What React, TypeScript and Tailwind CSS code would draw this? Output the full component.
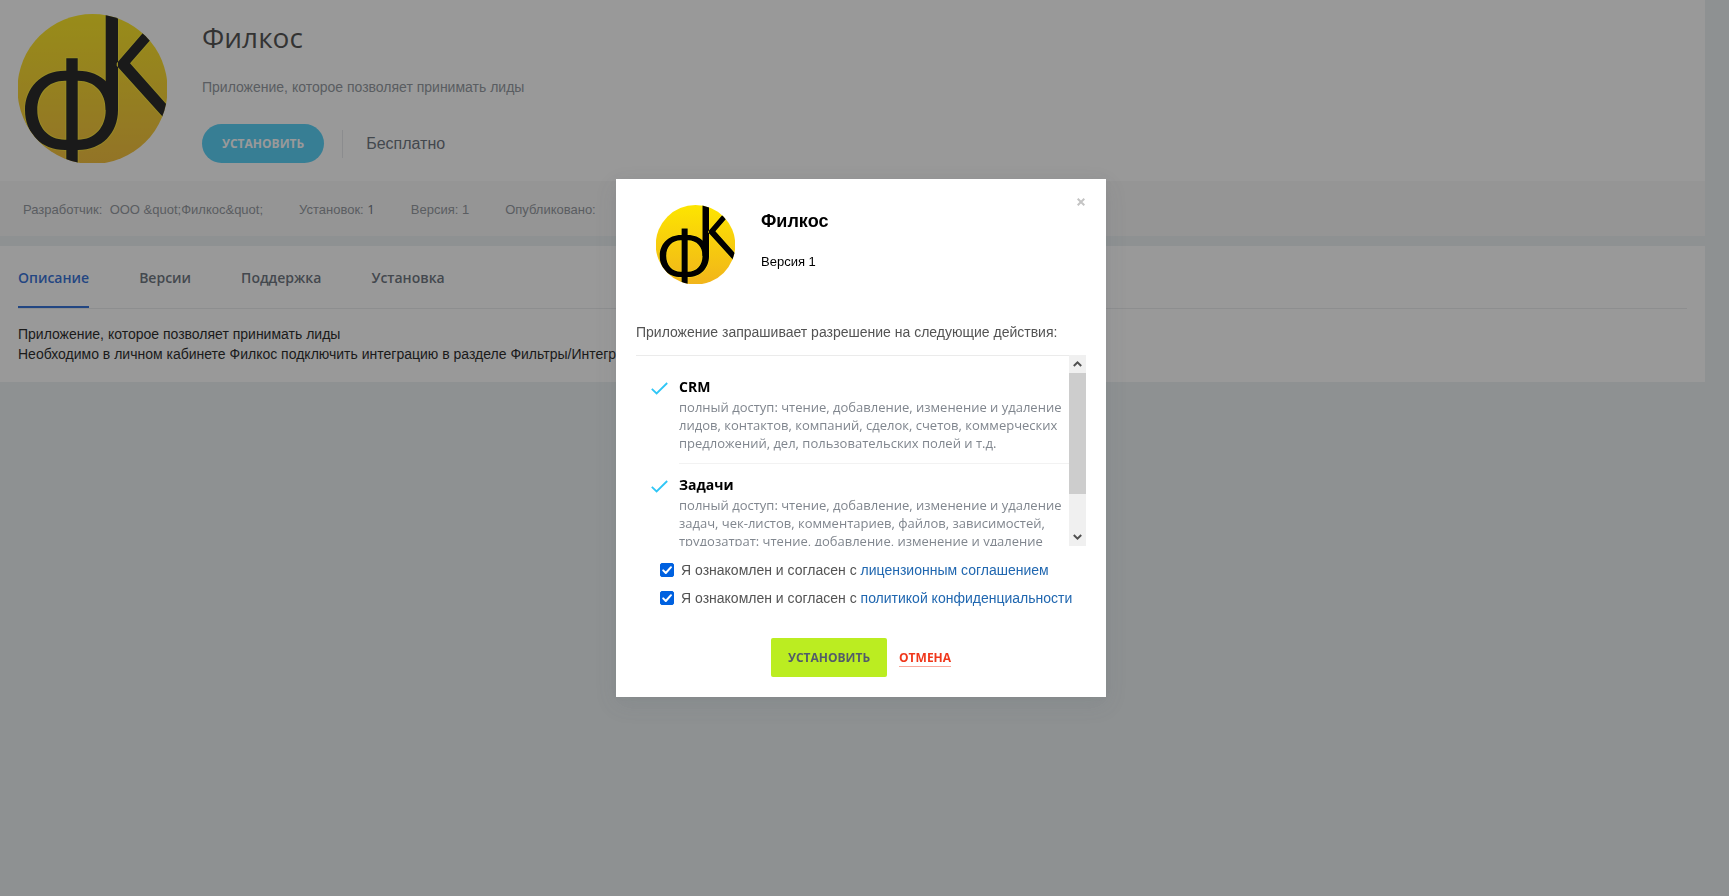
import { useId, useState } from 'react';

interface Permission {
  title: string;
  description: string;
}

const tabs = ['Описание', 'Версии', 'Поддержка', 'Установка'];

const permissions: Permission[] = [
  {
    title: 'CRM',
    description:
      'полный доступ: чтение, добавление, изменение и удаление лидов, контактов, компаний, сделок, счетов, коммерческих предложений, дел, пользовательских полей и т.д.',
  },
  {
    title: 'Задачи',
    description:
      'полный доступ: чтение, добавление, изменение и удаление задач, чек-листов, комментариев, файлов, зависимостей, трудозатрат: чтение, добавление, изменение и удаление',
  },
];

const LETTERS =
  'M87.7 -2H100V96H87.7Z M48.3 44.3H59.7V152H48.3Z M98.7 49.3L137 5L145 11.5L112 49.3L156 98.8L154 113L98.7 51.7Z';
const RING =
  'M47 56.7H60C84 56.7 100 74 100 96C100 119 84 136 60 136H47C23 136 7 119 7 96C7 74 23 56.7 47 56.7Z M47 66.7C30 66.7 19.3 79 19.3 96C19.3 113 30 125.7 47 125.7H60C77 125.7 87.7 113 87.7 96C87.7 79 77 66.7 60 66.7Z';

function AppLogo({ className }: { className: string }) {
  const id = useId();
  return (
    <svg viewBox="0 0 149 149" className={className} aria-hidden="true">
      <defs>
        <linearGradient id={`${id}-fill`} x1="0" y1="0" x2="0" y2="1">
          <stop offset="0" stopColor="#fde500" />
          <stop offset="1" stopColor="#f1b41b" />
        </linearGradient>
        <clipPath id={`${id}-clip`}>
          <circle cx="74.5" cy="75" r="75" />
        </clipPath>
      </defs>
      <g clipPath={`url(#${id}-clip)`}>
        <rect width="149" height="150" fill={`url(#${id}-fill)`} />
        <g fill="none" stroke="#fdf01c" strokeWidth="2" opacity="0.6">
          <path d={LETTERS} />
          <path d={RING} />
        </g>
        <g fill="#000" fillRule="evenodd">
          <path d={LETTERS} />
          <path d={RING} />
        </g>
      </g>
    </svg>
  );
}

function Agreement({ link }: { link: string }) {
  const [checked, setChecked] = useState(true);
  return (
    <label className="flex h-7 items-center gap-[7px] text-sm text-[#535353]">
      <span className="relative h-3.5 w-3.5 shrink-0">
        <input
          type="checkbox"
          checked={checked}
          onChange={(e) => setChecked(e.target.checked)}
          className="block h-3.5 w-3.5 appearance-none rounded-[2px] border border-[#8f8f9d] bg-white checked:border-[#0061e0] checked:bg-[#0061e0]"
        />
        {checked && (
          <svg viewBox="0 0 14 14" className="pointer-events-none absolute inset-0 h-3.5 w-3.5" aria-hidden="true">
            <path d="M3.2 7.4L5.8 10L11 4.2" fill="none" stroke="#fff" strokeWidth="2" strokeLinecap="round" strokeLinejoin="round" />
          </svg>
        )}
      </span>
      <span className="whitespace-nowrap">
        Я ознакомлен и согласен с <a href="#" className="text-[#2067b0]">{link}</a>
      </span>
    </label>
  );
}

function ScrollArrow({ label, path }: { label: string; path: string }) {
  return (
    <button type="button" aria-label={label} className="flex h-[18px] w-full items-center justify-center">
      <svg viewBox="0 0 9 6" className="h-1.5 w-[9px]" aria-hidden="true">
        <path d={path} fill="none" stroke="#505050" strokeWidth="2" />
      </svg>
    </button>
  );
}

function InstallDialog() {
  return (
    <div className="fixed inset-0 flex items-center justify-center bg-[#333]/50 pr-[7px] pb-5">
      <div role="dialog" aria-label="Филкос" className="relative w-[490px] bg-white px-5 pt-[26px] pb-5 shadow-[0_7px_21px_rgba(83,92,105,0.12),0_-1px_6px_rgba(83,92,105,0.06)]">
        <button type="button" aria-label="Закрыть" className="absolute top-[18px] right-5 p-[1px]">
          <svg viewBox="0 0 8 8" className="h-2 w-2" aria-hidden="true">
            <path d="M0.7 0.7L7.3 7.3M7.3 0.7L0.7 7.3" stroke="#c4c4c4" strokeWidth="2" />
          </svg>
        </button>

        <div className="flex pl-5">
          <AppLogo className="h-[79px] w-[79px] shrink-0" />
          <div className="pt-1 pl-[26px] text-black">
            <h2 className="text-lg leading-6 font-bold">Филкос</h2>
            <p className="mt-[19px] text-[13px] leading-5">Версия 1</p>
          </div>
        </div>

        <p className="mt-[38px] text-sm text-[#535353]">Приложение запрашивает разрешение на следующие действия:</p>

        <div className="mt-[13px] flex h-[191px]">
          <ul className="flex-1 overflow-hidden border-t border-[#ebebeb] pt-2.5 pl-[15px]">
            {permissions.map((item) => (
              <li key={item.title} className="flex font-['Open_Sans',sans-serif]">
                <svg viewBox="0 0 17 13" className="mt-4 h-[13px] w-[17px] shrink-0" aria-hidden="true">
                  <path d="M0.8 6.8L5.6 11.4L16.2 1" fill="none" stroke="#2fc6f6" strokeWidth="1.8" />
                </svg>
                <div className="ml-[11px] flex-1 border-b border-[#f2f2f2] pt-[11px] pb-[11px]">
                  <h3 className="text-sm leading-5 font-bold text-black">{item.title}</h3>
                  <p className="pt-[1px] text-[13px] leading-[18px] text-[#80868e]">{item.description}</p>
                </div>
              </li>
            ))}
          </ul>
          <div className="flex w-[17px] flex-col bg-[#f0f0f0]">
            <ScrollArrow label="Вверх" path="M0.8 5L4.5 1.4L8.2 5" />
            <div className="flex-1">
              <div className="h-[121px] bg-[#cdcdcd]" />
            </div>
            <ScrollArrow label="Вниз" path="M0.8 1L4.5 4.6L8.2 1" />
          </div>
        </div>

        <div className="mt-2.5 pl-6">
          <Agreement link="лицензионным соглашением" />
          <Agreement link="политикой конфиденциальности" />
        </div>

        <div className="mt-[26px] flex items-center justify-center gap-3 font-['Open_Sans',sans-serif] text-xs font-bold">
          <button type="button" className="h-[39px] rounded-[2px] bg-[#bbed21] px-[17px] text-[#535c69]">УСТАНОВИТЬ</button>
          <button type="button" className="border-b border-[#f9a99c] leading-[17px] text-[#f0371b]">ОТМЕНА</button>
        </div>
      </div>
    </div>
  );
}

export default function App() {
  const [activeTab, setActiveTab] = useState(tabs[0]);

  return (
    <div className="min-h-screen bg-[#e8eff0] pr-6 font-['Liberation_Sans',Arial,sans-serif]">
      <section className="bg-white">
        <div className="flex px-[18px] pt-3.5 pb-[18px]">
          <AppLogo className="h-[149px] w-[149px] shrink-0" />
          <div className="pt-[5px] pl-[35px]">
            <h1 className="font-['Open_Sans',sans-serif] text-[28px] leading-9 text-[#333]">Филкос</h1>
            <p className="mt-[22px] text-sm text-[#80868e]">Приложение, которое позволяет принимать лиды</p>
            <div className="mt-[27px] flex items-center">
              <button type="button" className="h-[39px] rounded-full bg-[#3bc8f5] px-5 font-['Open_Sans',sans-serif] text-xs font-bold text-white">
                УСТАНОВИТЬ
              </button>
              <span className="ml-[18px] border-l border-[#e3e5e8] py-0.5 pl-[23px] text-base text-[#535c69]">Бесплатно</span>
            </div>
          </div>
        </div>
        <div className="flex h-[55px] items-center gap-9 bg-[#f7f7f7] px-[23px] pt-0.5 text-[13px] text-[#80868e]">
          <span>Разработчик:&nbsp; ООО &amp;quot;Филкос&amp;quot;</span>
          <span>Установок: <span className="font-['Open_Sans',sans-serif] text-[#535c69]">1</span></span>
          <span>Версия: 1</span>
          <span>Опубликовано:</span>
        </div>
      </section>

      <section className="mt-2.5 bg-white px-[18px] pb-[18px]">
        <nav className="flex gap-[50px] border-b border-[#e6e8ea] font-['Open_Sans',sans-serif] text-sm font-semibold">
          {tabs.map((tab) => (
            <button
              key={tab}
              type="button"
              onClick={() => setActiveTab(tab)}
              className={`h-[62px] border-b-2 pt-[3px] ${tab === activeTab ? 'border-[#1058d0] text-[#1058d0]' : 'border-transparent text-[#535c69]'}`}
            >
              {tab}
            </button>
          ))}
        </nav>
        <div className="pt-[15px] text-sm text-black">
          <p>Приложение, которое позволяет принимать лиды</p>
          <p>Необходимо в личном кабинете Филкос подключить интеграцию в разделе Фильтры/Интеграции</p>
        </div>
      </section>

      <InstallDialog />
    </div>
  );
}
